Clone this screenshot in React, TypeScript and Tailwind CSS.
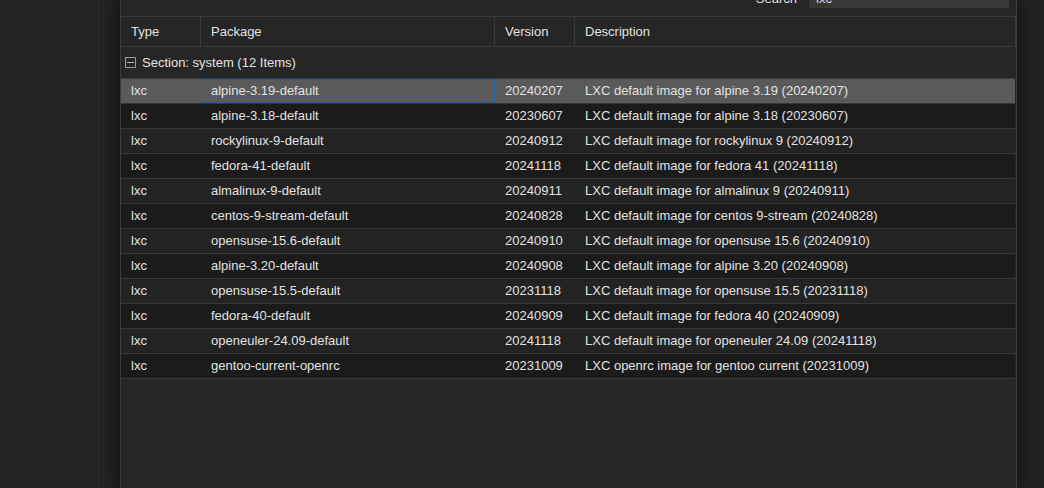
import React from "react";

const rows = [
  ["alpine-3.19-default", "20240207", "LXC default image for alpine 3.19 (20240207)"],
  ["alpine-3.18-default", "20230607", "LXC default image for alpine 3.18 (20230607)"],
  ["rockylinux-9-default", "20240912", "LXC default image for rockylinux 9 (20240912)"],
  ["fedora-41-default", "20241118", "LXC default image for fedora 41 (20241118)"],
  ["almalinux-9-default", "20240911", "LXC default image for almalinux 9 (20240911)"],
  ["centos-9-stream-default", "20240828", "LXC default image for centos 9-stream (20240828)"],
  ["opensuse-15.6-default", "20240910", "LXC default image for opensuse 15.6 (20240910)"],
  ["alpine-3.20-default", "20240908", "LXC default image for alpine 3.20 (20240908)"],
  ["opensuse-15.5-default", "20231118", "LXC default image for opensuse 15.5 (20231118)"],
  ["fedora-40-default", "20240909", "LXC default image for fedora 40 (20240909)"],
  ["openeuler-24.09-default", "20241118", "LXC default image for openeuler 24.09 (20241118)"],
  ["gentoo-current-openrc", "20231009", "LXC openrc image for gentoo current (20231009)"],
];

export default function App() {
  return (
    <div
      className="flex h-[488px] w-[1044px] overflow-hidden bg-[#232323] text-[13px] text-[#e2e2e2]"
      style={{ fontFamily: '"Liberation Sans", Arial, sans-serif' }}
    >
      <div className="w-[99px] shrink-0 border-r border-[#2b2b2b] bg-[#232323]" />
      <div className="ml-[21px] flex w-[897px] shrink-0 flex-col border-x border-[#3d3d3d] bg-[#262626] shadow-[0_0_18px_rgba(0,0,0,0.75)]">
        {/* toolbar, clipped at top */}
        <div className="flex h-[16px] items-end justify-end overflow-hidden pb-[8px] pr-[7px]">
          <span className="mb-[-3px] mr-[12px] leading-[24px] text-[#e2e2e2]">Search</span>
          <div className="flex h-[24px] w-[200px] items-center bg-[#383838] px-[7px] pt-[6px] text-[#d8d8d8]">lxc</div>
        </div>

        {/* header */}
        <div className="flex h-[31px] border-y border-[#3a3a3a] bg-[#262626]">
          <div className="flex w-[80px] items-center border-r border-[#3a3a3a] pl-[10px]">Type</div>
          <div className="flex w-[294px] items-center border-r border-[#3a3a3a] pl-[10px]">Package</div>
          <div className="flex w-[80px] items-center border-r border-[#3a3a3a] pl-[10px]">Version</div>
          <div className="flex flex-1 items-center border-r border-[#3a3a3a] pl-[10px]">Description</div>
        </div>

        {/* section */}
        <div className="flex h-[32px] items-center border-b border-[#3a3a3a] pl-[4px] pr-[1px]">
          <span className="mr-[6px] flex h-[11px] w-[11px] items-center justify-center border border-[#9a9a9a]">
            <span className="h-px w-[7px] bg-[#b0b0b0]" />
          </span>
          <span>Section: system (12 Items)</span>
        </div>

        {/* rows */}
        <div className="mr-px">
          {rows.map((r, i) => {
            const selected = i === 0;
            const bg = selected ? "bg-[#5a5a5a]" : i % 2 === 1 ? "bg-[#1b1b1b]" : "bg-[#232323]";
            return (
              <div key={r[0]} className={`flex h-[25px] border-b border-[#363636] ${bg}`}>
                <div className="flex w-[80px] items-center pl-[10px]">lxc</div>
                <div
                  className={`flex w-[294px] items-center pl-[10px] ${
                    selected ? "shadow-[inset_0_0_0_1px_#1f62a6]" : ""
                  }`}
                >
                  {r[0]}
                </div>
                <div className="flex w-[80px] items-center pl-[10px]">{r[1]}</div>
                <div className="flex flex-1 items-center pl-[10px]">{r[2]}</div>
              </div>
            );
          })}
        </div>
      </div>
    </div>
  );
}
